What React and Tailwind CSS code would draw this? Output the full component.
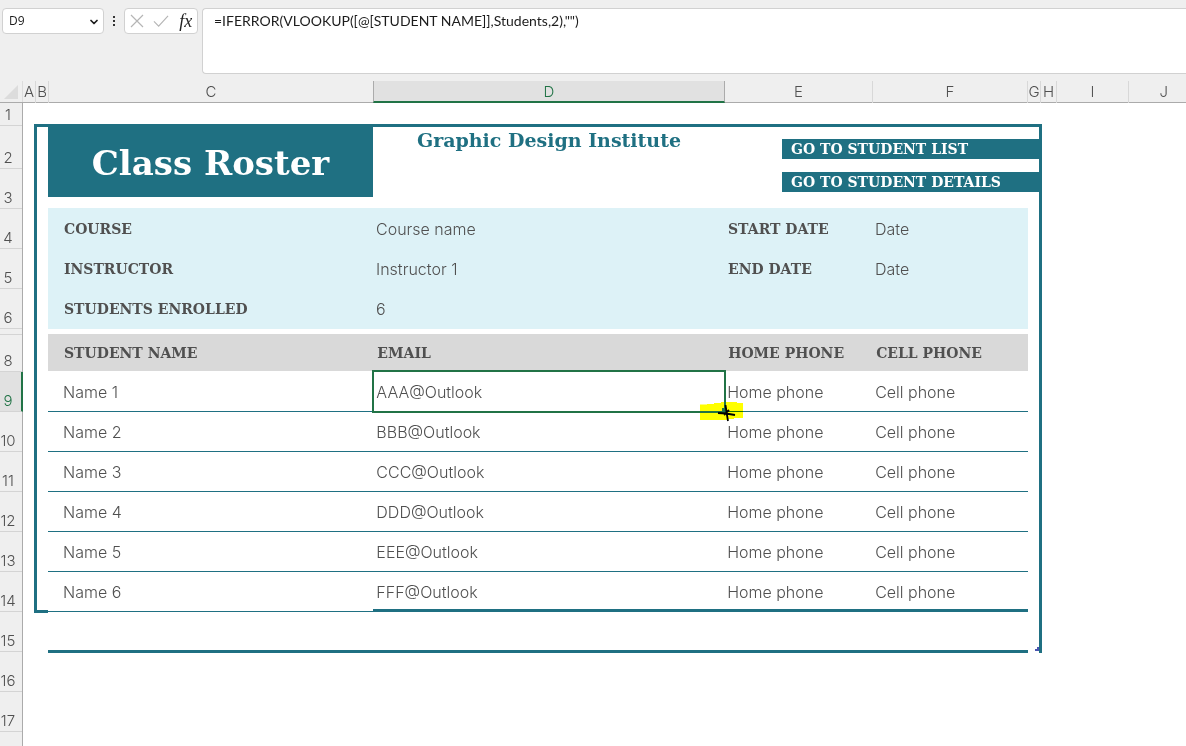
import { ChevronDown } from 'lucide-react';

const columns = ['A', 'B', 'C', 'D', 'E', 'F', 'G', 'H', 'I', 'J'];

const rows = [
  { n: 1, height: 'h-[23px]' },
  { n: 2, height: 'h-[43px]' },
  { n: 3, height: 'h-10' },
  { n: 4, height: 'h-10' },
  { n: 5, height: 'h-10' },
  { n: 6, height: 'h-10' },
  { n: '', height: 'h-1.5' },
  { n: 8, height: 'h-[37px]' },
  { n: 9, height: 'h-10' },
  { n: 10, height: 'h-10' },
  { n: 11, height: 'h-10' },
  { n: 12, height: 'h-10' },
  { n: 13, height: 'h-10' },
  { n: 14, height: 'h-10' },
  { n: 15, height: 'h-10' },
  { n: 16, height: 'h-10' },
  { n: 17, height: 'h-10' },
];

const students = [
  { name: 'Name 1', email: 'AAA@Outlook' },
  { name: 'Name 2', email: 'BBB@Outlook' },
  { name: 'Name 3', email: 'CCC@Outlook' },
  { name: 'Name 4', email: 'DDD@Outlook' },
  { name: 'Name 5', email: 'EEE@Outlook' },
  { name: 'Name 6', email: 'FFF@Outlook' },
];

const FormulaBar = () => (
  <div className="flex items-start pt-2 pb-[7px] pl-0.5 font-[Lato,sans-serif] text-sm font-normal text-[#1c1c1c]">
    <div className="relative">
      <select
        aria-label="Name box"
        defaultValue="D9"
        className="h-[26px] w-[102px] appearance-none rounded-[4px] border border-[#d1d1d1] bg-white pl-1.5 font-[Open_Sans,sans-serif] text-xs"
      >
        <option>D9</option>
      </select>
      <ChevronDown className="pointer-events-none absolute top-2 right-1 size-3" strokeWidth={3.5} />
    </div>
    <svg viewBox="0 0 20 26" className="h-[26px] w-5" fill="#333">
      <rect x="9" y="8" width="2" height="2" />
      <rect x="9" y="12" width="2" height="2" />
      <rect x="9" y="16" width="2" height="2" />
    </svg>
    <div className="flex h-[26px] w-[74px] items-center justify-around rounded-[4px] border border-[#d1d1d1] bg-white">
      <button type="button" aria-label="Cancel">
        <svg viewBox="0 0 14 14" className="size-3.5" fill="none" stroke="#b5b5b5" strokeWidth="1.2">
          <path d="M1 1l12 12M13 1L1 13" />
        </svg>
      </button>
      <button type="button" aria-label="Enter">
        <svg viewBox="0 0 17 14" className="h-3.5 w-4" fill="none" stroke="#b5b5b5" strokeWidth="1.2">
          <path d="M1 7.500l5 5L16 1.500" />
        </svg>
      </button>
      <button type="button" className="font-[Liberation_Serif,serif] text-lg leading-none italic text-[#222]">
        fx
      </button>
    </div>
    <textarea
      aria-label="Formula"
      defaultValue={'=IFERROR(VLOOKUP([@[STUDENT NAME]],Students,2),"")'}
      className="ml-1 h-[66px] flex-1 resize-none rounded-l-[4px] border border-r-0 border-[#d1d1d1] bg-white px-[11px] py-0.5 leading-5"
    />
  </div>
);

const ColumnHeaders = () => (
  <div className="flex h-[22px] border-b border-[#ababab]">
    <div className="flex w-[23px] justify-end border-r border-[#dcdcdc] pt-1 pr-1">
      <svg viewBox="0 0 14 14" className="size-3.5" fill="#dcdcdc">
        <path d="M14 0v14H0z" />
      </svg>
    </div>
    <div className="grid flex-1 grid-cols-[13px_13px_325fr_351fr_148fr_155fr_13px_16px_72fr_57fr]">
      {columns.map((col) => (
        <div
          key={col}
          className={
            col === 'D'
              ? '-ml-px flex h-[22px] items-center justify-center border-x border-b-2 border-x-[#ababab] border-b-[#217346] bg-[#e1e1e1] pt-0.5 text-[#217346]'
              : 'flex items-center justify-center border-r border-[#d8d8d8] last:justify-end last:border-r-0 last:pr-[18px]'
          }
        >
          {col}
        </div>
      ))}
    </div>
  </div>
);

const RowHeaders = () => (
  <div className="w-[23px] border-r border-[#ababab]">
    {rows.map(({ n, height }, i) => (
      <div
        key={i}
        className={`${height} flex items-end overflow-hidden border-b border-[#d4d4d4] leading-5 ${
          n === 9 ? '-mr-px border-r-2 border-r-[#217346] bg-[#e1e1e1] text-[#217346]' : ''
        }`}
      >
        <span className="w-4 text-center">{n}</span>
      </div>
    ))}
  </div>
);

const Title = () => (
  <header className="grid grid-cols-[325fr_352fr_147fr_156fr_11px] font-[DejaVu_Serif,serif] font-bold">
    <h1 className="flex h-[70px] items-center justify-center bg-[#1f7082] pt-0.5 text-[34px] text-white">
      Class Roster
    </h1>
    <h2 className="text-center text-[19px] leading-[26px] text-[#1f7082]">Graphic Design Institute</h2>
    <nav className="col-span-3 ml-[57px] flex flex-col gap-[13px] pt-3 text-sm leading-5 text-white">
      <a href="#list" className="bg-[#1f7082] pl-[9px] whitespace-nowrap">GO TO STUDENT LIST</a>
      <a href="#details" className="bg-[#1f7082] pl-[9px] whitespace-nowrap">GO TO STUDENT DETAILS</a>
    </nav>
  </header>
);

const Label = ({ children, className }) => (
  <dt className={`font-[DejaVu_Serif,serif] text-sm font-bold whitespace-nowrap ${className}`}>{children}</dt>
);

const CourseInfo = () => (
  <dl className="mt-[11px] mr-[11px] grid auto-rows-[40px] grid-cols-[325fr_352fr_147fr_156fr] items-center bg-[#ddf2f7] pt-px text-base">
    <Label className="pl-4">COURSE</Label>
    <dd className="pl-[3px]">Course name</dd>
    <Label className="pl-[3px]">START DATE</Label>
    <dd className="pl-[3px]">Date</dd>
    <Label className="pl-4">INSTRUCTOR</Label>
    <dd className="pl-[3px]">Instructor 1</dd>
    <Label className="pl-[3px]">END DATE</Label>
    <dd className="pl-[3px]">Date</dd>
    <Label className="pl-4">STUDENTS ENROLLED</Label>
    <dd className="pl-[3px]">6</dd>
  </dl>
);

// Green selection box with the fill handle and the highlighted cursor
const Selection = () => (
  <>
    <svg viewBox="0 0 44 20" className="absolute -right-[19px] -bottom-2.5 h-5 w-11 mix-blend-multiply" fill="#ff0">
      <path d="M0 3.500h7V3h7V2h7V1h16v1h6v15h-9v1h-6v1H0z" />
    </svg>
    <span className="absolute -inset-x-px -top-0.5 -bottom-0.5 border-2 border-[#217346]" />
    <svg viewBox="0 0 20 18" className="absolute -right-3 -bottom-3 h-[18px] w-5">
      <rect x="5" y="3" width="5" height="5" fill="#217346" />
      <path d="M8.500 0l1 7 1.500 9M1 8l8 .5 9 1.500M12 5l-5 5" fill="none" stroke="#000" strokeWidth="1.800" />
    </svg>
  </>
);

const Roster = () => (
  <div className="mt-[5px] mr-[11px]">
    <table className="w-full table-fixed border-separate border-spacing-0 text-left text-base">
      <colgroup>
        <col className="w-[33.2%]" />
        <col className="w-[35.9%]" />
        <col className="w-[15%]" />
        <col />
      </colgroup>
      <thead className="font-[DejaVu_Serif,serif] text-sm whitespace-nowrap">
        <tr className="h-[38px]">
          <th className="border-b border-white bg-[#d9d9d9] pl-4">STUDENT NAME</th>
          <th className="border-b border-white bg-[#d9d9d9] pl-1">EMAIL</th>
          <th className="border-b border-white bg-[#d9d9d9] pl-[3px]">HOME PHONE</th>
          <th className="border-b border-white bg-[#d9d9d9] pl-1">CELL PHONE</th>
        </tr>
      </thead>
      <tbody>
        {students.map((student, i) => {
          const line =
            i === students.length - 1
              ? 'border-b-3 border-[#1f7082] pt-0.5'
              : 'border-b border-[#1f7082]';
          return (
            <tr key={student.name} className="h-10">
              <td className="border-b border-[#1f7082] pl-[15px]">{student.name}</td>
              <td className={`relative pl-[3px] ${line}`}>
                {student.email}
                {i === 0 && <Selection />}
              </td>
              <td className={`pl-0.5 ${line}`}>Home phone</td>
              <td className={`pl-[3px] ${line}`}>Cell phone</td>
            </tr>
          );
        })}
      </tbody>
    </table>
    <div className="h-[41px] border-b-3 border-[#1f7082]" />
  </div>
);

export default function App() {
  return (
    <div className="flex min-h-screen flex-col bg-[#efefef] font-[Inter,sans-serif] text-[15px] font-light text-[#505050]">
      <FormulaBar />
      <ColumnHeaders />
      <div className="flex flex-1">
        <RowHeaders />
        <main className="grid flex-1 grid-cols-[11px_1008fr_144fr] items-start bg-white pt-[21px]">
          <div className="relative col-start-2 flex border-t-3 border-r-3 border-[#1f7082]">
            <div className="mb-10 w-3.5 border-b-3 border-l-3 border-[#1f7082]" />
            <div className="flex-1">
              <Title />
              <CourseInfo />
              <Roster />
            </div>
            <svg viewBox="0 0 4 4" className="absolute right-0 bottom-0.5 size-1" fill="#4a55b0">
              <path d="M2 0h2v4H0V2h2z" />
            </svg>
          </div>
        </main>
      </div>
    </div>
  );
}
